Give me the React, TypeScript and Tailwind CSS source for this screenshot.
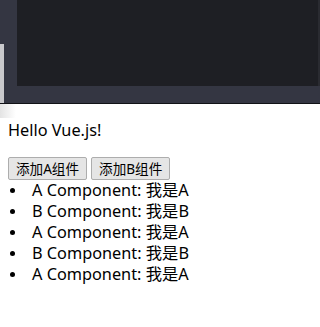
const items = ["A", "B", "A", "B", "A"];

export default function App() {
  return (
    <div className="min-h-[327px] bg-white text-black font-['Microsoft_YaHei','Noto_Sans','Noto_Sans_CJK_SC',sans-serif]">
      {/* dark editor strip at the top */}
      <div className="relative">
        <div className="flex h-[86px] bg-[#343642]">
          <div className="w-[17px] shrink-0" />
          <div className="flex-1 bg-[#1e1f24]" />
          <div className="w-[2px] shrink-0 bg-[#2a2b31]" />
        </div>
        <div className="h-[17px] bg-[#343642]" />
        <div className="h-px bg-[#111216]" />
        <div className="absolute left-0 top-[44px] h-[59px] w-[4px] bg-[#c9c9cc]" />
        <div className="absolute left-0 top-[104px] h-[14px] w-[16px] bg-gradient-to-r from-[#e4e4e4] to-white" />
      </div>

      <div className="px-2">
        <p className="my-4 text-[16.3px] leading-[21px]">Hello Vue.js!</p>
        <div className="flex gap-1">
          <button className="h-[23px] rounded-[2px] border border-[#adadad] bg-[#e5e5e5] px-[7px] text-[13.6px] leading-[19px]">
            添加A组件
          </button>
          <button className="h-[23px] rounded-[2px] border border-[#adadad] bg-[#e5e5e5] px-[7px] text-[13.6px] leading-[19px]">
            添加B组件
          </button>
        </div>
      </div>

      <ul className="text-[16.3px] leading-[21px]">
        {items.map((k, i) => (
          <li key={i} className="flex items-center">
            <span className="ml-[10px] mr-[17px] h-[5px] w-[5px] rounded-full bg-black" />
            <span>
              {k} Component: 我是{k}
            </span>
          </li>
        ))}
      </ul>
    </div>
  );
}
